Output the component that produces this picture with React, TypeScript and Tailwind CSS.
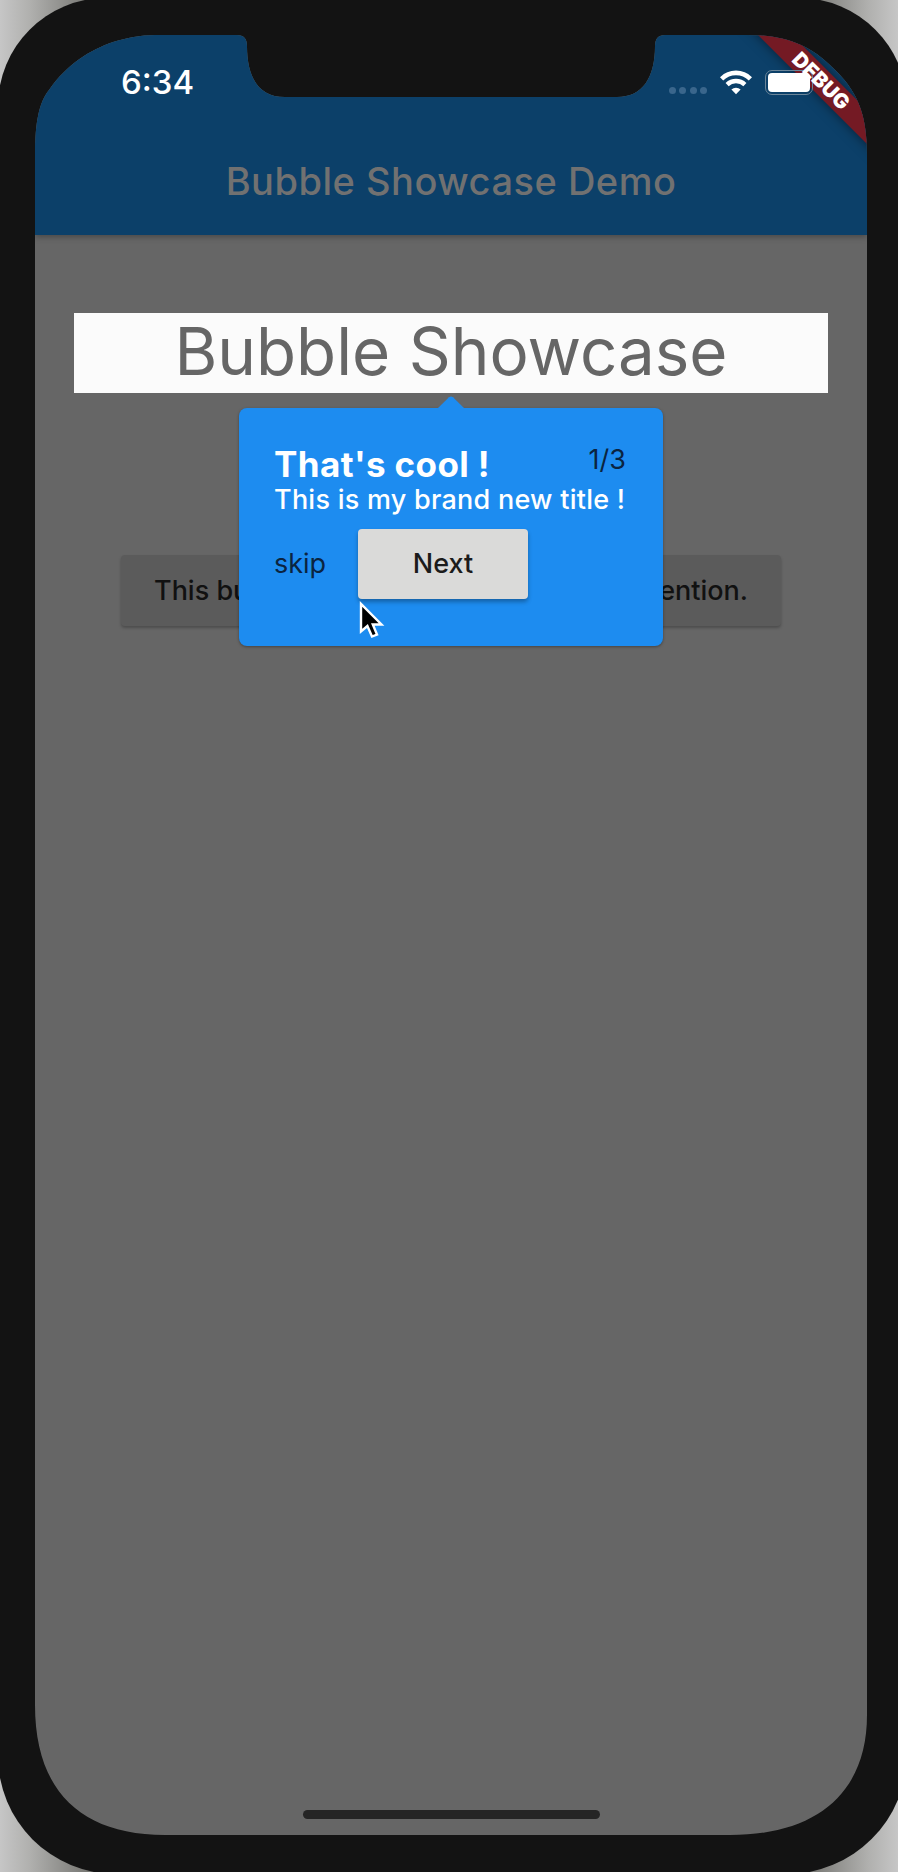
import React from "react";

function WifiIcon() {
  return (
    <svg width="32" height="25" viewBox="0 0 32 25" fill="none">
      <path d="M1.6 8.8a20.5 20.5 0 0 1 28.8 0" stroke="white" strokeWidth="4.6" />
      <path d="M7.1 14.6a12.8 12.8 0 0 1 17.8 0" stroke="white" strokeWidth="4.4" />
      <path d="M16 24.2l-4.6-4.7a6.6 6.6 0 0 1 9.2 0z" fill="white" />
    </svg>
  );
}

function StatusBar() {
  return (
    <div className="relative z-10 flex h-[94px] items-center justify-between pr-[54px] pl-[86px]">
      <span className="text-[33px] leading-[40px] font-medium text-white">6:34</span>
      <div className="flex items-center gap-[13px]">
        <div className="mt-[17px] flex gap-[3.4px]">
          {[0, 1, 2, 3].map((dot) => (
            <span key={dot} className="size-[7px] rounded-full bg-[#3a668c]" />
          ))}
        </div>
        <WifiIcon />
        <div className="h-[25px] w-[48px] rounded-[7px] border border-[#6b8599] p-[2px]">
          <div className="h-full w-full rounded-[4px] bg-white" />
        </div>
      </div>
    </div>
  );
}

function DebugBanner() {
  return (
    <>
      <div className="absolute top-[34px] left-[686px] h-[24px] w-[200px] rotate-45 bg-[#741a24] shadow-[0_0_12px_rgba(0,0,0,0.5)]" />
      <div className="absolute top-[34px] left-[686px] z-20 flex h-[24px] w-[200px] rotate-45 items-center justify-center">
        <span className="text-[20.5px] leading-none font-black text-white">DEBUG</span>
      </div>
    </>
  );
}

function Bubble() {
  return (
    <div className="absolute top-[373px] left-[204px] h-[238px] w-[424px] rounded-[8px] bg-[#1d8cf0] px-[35px] pt-[35px] shadow-[0_1px_3px_rgba(0,0,0,0.35)]">
      <svg width="28" height="13" viewBox="0 0 28 13" className="absolute top-[-12px] left-[198px]">
        <path d="M0 13L12 1.2Q14 -.4 16 1.2L28 13Z" fill="#1d8cf0" />
      </svg>
      <div className="flex w-[352px] items-start justify-between">
        <h2 className="text-[35px] leading-[42px] font-bold tracking-[0.4px] whitespace-nowrap text-white">That's cool !</h2>
        <span className="text-[27px] leading-[33px] text-[#0b2440]">1/3</span>
      </div>
      <p className="text-[27px] leading-[30px] font-medium tracking-[0.25px] whitespace-nowrap text-white">This is my brand new title !</p>
      <div className="mt-[14px] flex items-center">
        <button className="w-[84px] text-left text-[27px] text-[#0b2440]">skip</button>
        <button className="h-[70px] w-[170px] rounded-[4px] bg-[#dadad9] text-[27px] font-medium text-[#1b1b1b] shadow-[0_3px_4px_rgba(0,0,0,0.3)]">Next</button>
      </div>
    </div>
  );
}

function Cursor() {
  return (
    <svg width="26" height="40" viewBox="0 0 26 40" className="absolute top-[566px] left-[324px]">
      <path d="M2 3V30.5L8.4 25L13 35.5L18 33.5L13.8 23.5H22.5Z" fill="black" stroke="white" strokeWidth="2.4" />
    </svg>
  );
}

export default function App() {
  return (
    <div className="h-[1872px] w-[898px] overflow-hidden bg-[linear-gradient(90deg,#c6c6c6_0px,#b0b0ae_30px,#70706c_95px,#70706c_803px,#b0b0ae_868px,#c6c6c6_898px)] font-['Inter',sans-serif]">
      <div className="-mt-[2px] -ml-[2px] h-[1876px] w-[909px] rounded-[108px_108px_120px_118px] bg-[#131313] pt-[37px] pl-[37px]">
        <div className="relative flex h-[1800px] w-[832px] flex-col overflow-hidden bg-[#666] [clip-path:path('M0_120C0_88_4_67_14_55C32_29_55_15_78_7C92_3_105_0_120_0H202Q212_0_212_11C212_40_222_62_250_62H582C608_62_620_42_620_11Q620_0_630_0H712C750_0_775_10_797_32C822_55_832_78_832_120V1680C832_1755_785_1800_695_1800H130C45_1800_0_1755_0_1670Z')]">
          <header className="flex h-[200px] shrink-0 flex-col bg-[#0c4069] shadow-[0_2px_6px_rgba(0,0,0,0.3)]">
            <StatusBar />
            <div className="flex flex-1 items-center justify-center pb-[2px]">
              <h1 className="text-[38px] font-medium tracking-[0.5px] whitespace-nowrap text-[#717171]">Bubble Showcase Demo</h1>
            </div>
          </header>
          <main className="flex flex-1 flex-col gap-[162px] px-[39px] pt-[78px]">
            <div className="flex h-[80px] items-center justify-center bg-[#fbfbfb] pb-[2px] text-[65.5px] whitespace-nowrap text-[#666]">Bubble Showcase</div>
            <div className="flex h-[71px] w-[660px] items-center justify-between self-center rounded-[4px] bg-[#5b5b5b] px-[33px] pt-[1px] text-[27px] font-medium text-[#111] shadow-[0_2px_3px_rgba(0,0,0,0.25)]">
              <span className="whitespace-nowrap">This button also</span>
              <span className="whitespace-nowrap">requires your attention.</span>
            </div>
          </main>
          <footer className="flex justify-center pb-[16px]">
            <div className="h-[9px] w-[297px] rounded-full bg-[#252525]" />
          </footer>
          <DebugBanner />
          <Bubble />
          <Cursor />
        </div>
      </div>
    </div>
  );
}
